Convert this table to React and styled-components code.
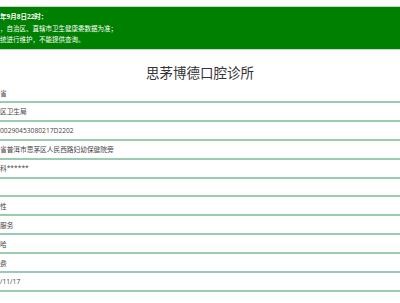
import React from 'react';
import styled, { createGlobalStyle } from 'styled-components';

const GlobalStyle = createGlobalStyle`
  html, body {
    margin: 0;
    padding: 0;
    background: #fff;
    overflow: hidden;
  }
  body {
    font-family: "Open Sans", "Noto Sans CJK SC", sans-serif;
  }
`;

const Page = styled.div`
  width: 400px;
  padding-top: 6px;
`;

const Notice = styled.div`
  background: #008000;
  border-top: 1px solid #c4dcc4;
  border-bottom: 1px solid #c4dcc4;
  color: #fff;
  font-size: 6.5px;
  line-height: 11.5px;
  padding: 4px 0 3px;
  white-space: nowrap;
  overflow: hidden;
`;

const NoticeLine = styled.div`
  font-weight: ${props => (props.bold ? 700 : 400)};
`;

const Title = styled.h1`
  margin: 12px 0 2.6px;
  font-size: 13.5px;
  line-height: 20px;
  font-weight: 400;
  color: #333;
  text-align: center;
  font-family: "Noto Sans CJK SC", sans-serif;
`;

const List = styled.div`
  display: flex;
  flex-direction: column;
`;

const Row = styled.div`
  height: 16.9px;
  border-bottom: 2px solid #9bcbb0;
  display: flex;
  align-items: center;
  font-size: 6.7px;
  color: #444;
  white-space: nowrap;
  overflow: hidden;
`;

const notice = [
  { text: '年9月8日22时：', bold: true },
  { text: '，自治区、直辖市卫生健康委数据为准；' },
  { text: '统进行维护，不能提供查询。' },
];

const rows = [
  '省',
  '区卫生局',
  '00290453080217D2202',
  '省普洱市思茅区人民西路妇幼保健院旁',
  '科******',
  '',
  '性',
  '服务',
  '哈',
  '费',
  '/11/17',
];

export default function App() {
  return (
    <>
      <GlobalStyle />
      <Page>
        <Notice>
          {notice.map((n, i) => (
            <NoticeLine key={i} bold={n.bold}>{n.text}</NoticeLine>
          ))}
        </Notice>
        <Title>思茅博德口腔诊所</Title>
        <List>
          {rows.map((r, i) => (
            <Row key={i}>{r}</Row>
          ))}
        </List>
      </Page>
    </>
  );
}
